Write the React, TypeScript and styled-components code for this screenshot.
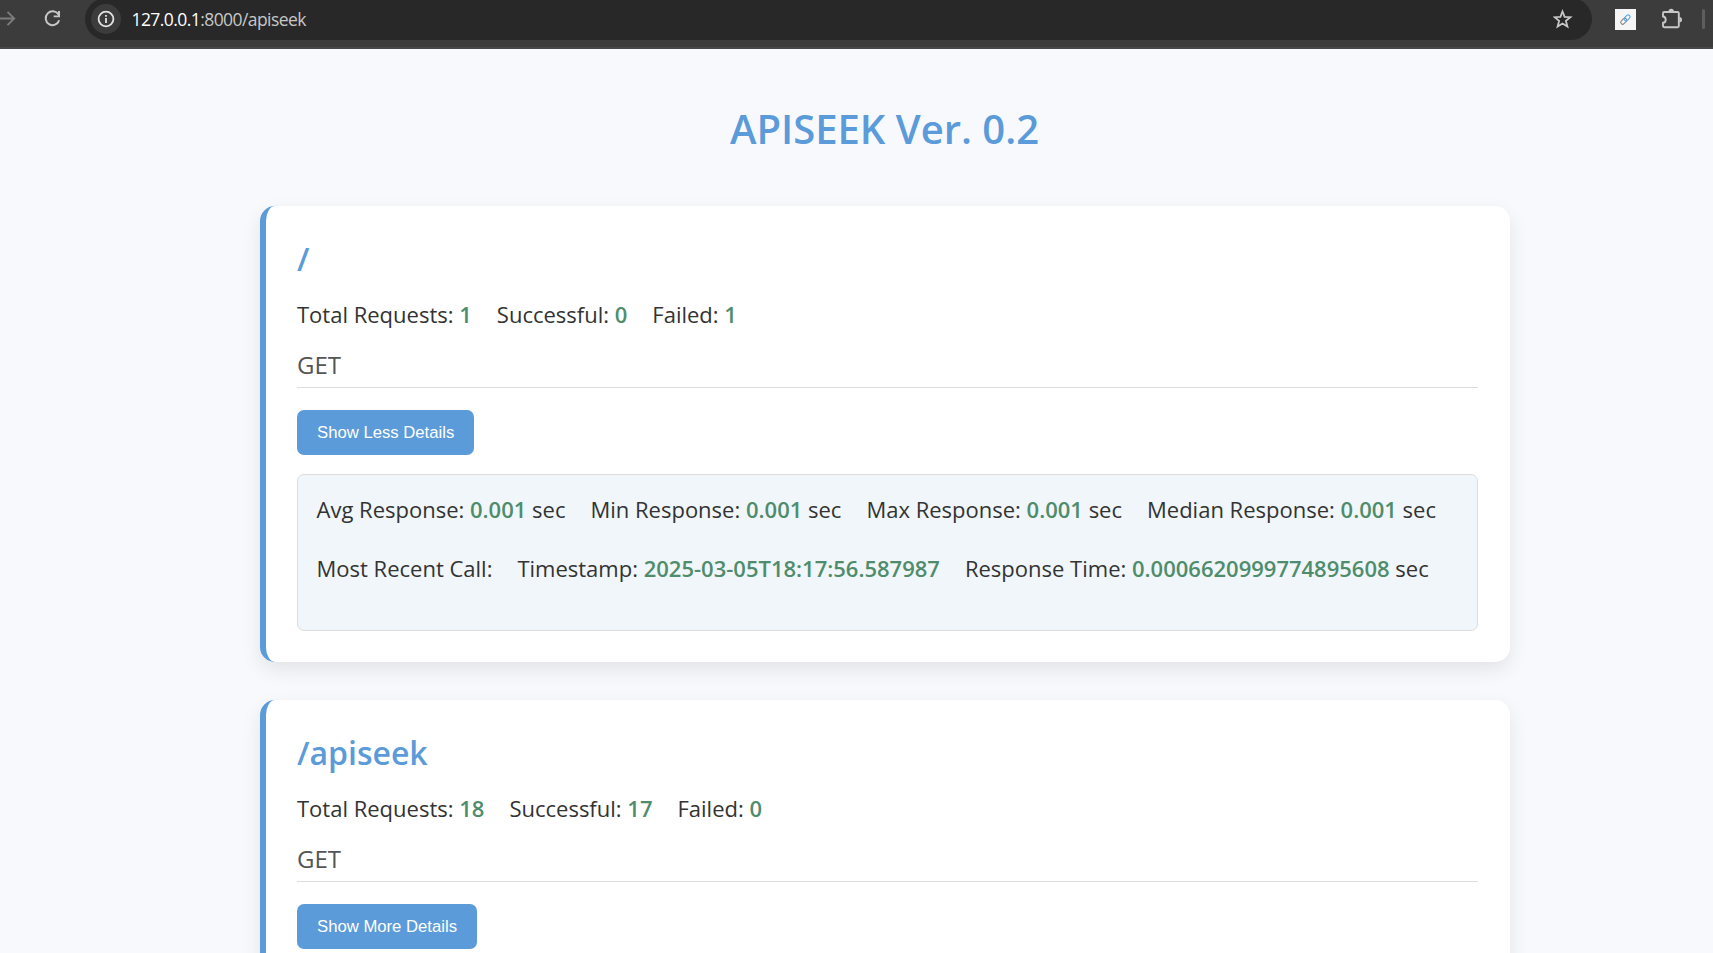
import React from "react";
import styled, { createGlobalStyle } from "styled-components";

const GlobalStyle = createGlobalStyle`
  *, *::before, *::after { box-sizing: border-box; }
  html, body { margin: 0; padding: 0; height: 100%; overflow: hidden; }
  body {
    background: #f8f9fd;
    color: #333;
    font-family: "Open Sans", "Noto Sans", sans-serif;
  }
`;

const Window = styled.div`
  height: 953px;
  overflow: hidden;
`;

const BrowserBar = styled.header`
  display: flex;
  align-items: flex-start;
  height: 49px;
  background: #3c3c3c;
  border-bottom: 2px solid #484646;
`;

const NavIcons = styled.div`
  display: flex;
  align-items: center;
  width: 85px;
  height: 38px;
`;

const AddressBar = styled.div`
  display: flex;
  align-items: center;
  width: 1507px;
  height: 42px;
  margin-top: -2px;
  padding: 2px 19px 2px 6px;
  background: #282828;
  border-radius: 21px;
`;

const InfoBadge = styled.span`
  display: flex;
  align-items: center;
  justify-content: center;
  width: 30px;
  height: 30px;
  border-radius: 50%;
  background: #3c3c3c;
`;

const Url = styled.span`
  flex: 1;
  margin-left: 10.5px;
  color: #c7c7c7;
  font-size: 17.5px;
  line-height: 24px;
  letter-spacing: -0.57px;
  white-space: nowrap;
`;

const Host = styled.span`
  color: #fff;
`;

const Extensions = styled.div`
  display: flex;
  align-items: center;
  height: 38px;
  margin-left: 23px;
`;

const LinkTile = styled.span`
  display: flex;
  align-items: center;
  justify-content: center;
  width: 21px;
  height: 21px;
  background: #f5f5f5;
`;

const PuzzleSlot = styled.span`
  display: flex;
  margin-left: 25px;
`;

const Separator = styled.span`
  width: 3px;
  height: 20px;
  margin-left: 19px;
  border-radius: 2px;
  background: #5e5e5e;
`;

const Page = styled.main`
  width: 1770px;
  padding-top: 48px;
`;

const Title = styled.h1`
  margin: 0 1px 45px 0;
  color: #5b9bd9;
  font-size: 40px;
  font-weight: 600;
  line-height: 64px;
  text-align: center;
`;

const CardList = styled.div`
  display: flex;
  flex-direction: column;
  gap: 38px;
  width: 1250px;
  margin: 0 auto;
`;

const Card = styled.section`
  padding: 31px 32px 31px 31px;
  background: #fff;
  border-left: 6px solid #5b9bd9;
  border-radius: 15px;
  box-shadow: 0 8px 20px rgba(0, 0, 0, 0.085);
`;

const Path = styled.h2`
  margin: 0;
  color: #5b9bd9;
  font-size: 32px;
  font-weight: 600;
  line-height: 44px;
`;

const StatRow = styled.div`
  display: flex;
  gap: 25px;
  font-size: 22px;
  line-height: 36px;
  white-space: nowrap;
`;

const Totals = styled(StatRow)`
  margin-top: 15px;
`;

const Value = styled.span`
  color: #4f8c6c;
  font-weight: 600;
`;

const Method = styled.h3`
  height: 42px;
  margin: 14px 0 22px;
  border-bottom: 1px solid #ddd;
  color: #555;
  font-size: 24px;
  font-weight: 400;
  line-height: 38px;
`;

const ToggleButton = styled.button`
  display: block;
  height: 45px;
  padding: 0 20px;
  border: 0;
  border-radius: 7px;
  background: #5b9bd9;
  color: #fff;
  font-family: "Liberation Sans", Arial, sans-serif;
  font-size: 16.7px;
  line-height: 20px;
`;

const Details = styled.div`
  display: flex;
  flex-direction: column;
  gap: 23px;
  height: 157px;
  margin-top: 19px;
  padding: 16px 18px;
  padding-left: 18.5px;
  background: #f0f6fa;
  border: 1px solid #ddd;
  border-radius: 7px;
`;

type StatProps = { label: string; value?: string; unit?: string };

const Stat = ({ label, value, unit }: StatProps) => (
  <span>
    {label}:{value && <> <Value>{value}</Value></>}
    {unit && ` ${unit}`}
  </span>
);

type EndpointProps = {
  path: string;
  total: string;
  successful: string;
  failed: string;
  expanded?: boolean;
};

const Endpoint = ({ path, total, successful, failed, expanded }: EndpointProps) => (
  <Card>
    <Path>{path}</Path>
    <Totals>
      <Stat label="Total Requests" value={total} />
      <Stat label="Successful" value={successful} />
      <Stat label="Failed" value={failed} />
    </Totals>
    <Method>GET</Method>
    <ToggleButton>{expanded ? "Show Less Details" : "Show More Details"}</ToggleButton>
    {expanded && (
      <Details>
        <StatRow>
          <Stat label="Avg Response" value="0.001" unit="sec" />
          <Stat label="Min Response" value="0.001" unit="sec" />
          <Stat label="Max Response" value="0.001" unit="sec" />
          <Stat label="Median Response" value="0.001" unit="sec" />
        </StatRow>
        <StatRow>
          <Stat label="Most Recent Call" />
          <Stat label="Timestamp" value="2025-03-05T18:17:56.587987" />
          <Stat label="Response Time" value="0.0006620999774895608" unit="sec" />
        </StatRow>
      </Details>
    )}
  </Card>
);

const NavDrawing = () => (
  <svg width="85" height="38" viewBox="0 0 85 38" fill="none">
    <path d="M0 18.5H14M7.5 11.8L14.2 18.5L7.5 25.2" stroke="#7c7c7c" strokeWidth="1.9" />
    <path d="M58.5 14.6A6.9 6.9 0 1 0 59.2 20.3" stroke="#c7c7c7" strokeWidth="2" />
    <path d="M60 11V17.3H53.7V15.4H58V11Z" fill="#c7c7c7" />
  </svg>
);

const InfoIcon = () => (
  <svg width="18" height="18" viewBox="0 0 18 18" fill="none">
    <circle cx="9" cy="9" r="7.4" stroke="#e3e3e3" strokeWidth="1.8" />
    <path d="M9 8V13M9 5V6.8" stroke="#e3e3e3" strokeWidth="1.8" />
  </svg>
);

const StarIcon = () => (
  <svg width="20" height="20" viewBox="0 0 20 20" fill="none">
    <path
      d="M9.5 2.5L11.6 7.8L17.4 8.2L12.9 11.9L14.4 17.6L9.5 14.5L4.6 17.6L6.1 11.9L1.6 8.2L7.4 7.8Z"
      stroke="#c7c7c7"
      strokeWidth="1.8"
    />
  </svg>
);

const LinkIcon = () => (
  <svg width="13" height="13" viewBox="0 0 13 13" fill="none">
    <g transform="rotate(-45 6.5 6.5)" strokeWidth="1.1">
      <rect x="0.6" y="4.6" width="6.8" height="3.8" rx="1.9" stroke="#858585" />
      <rect x="5.4" y="4.6" width="6.8" height="3.8" rx="1.9" stroke="#5ba6ea" />
    </g>
  </svg>
);

const PuzzleIcon = () => (
  <svg width="22" height="22" viewBox="0 0 22 22" fill="none">
    <path
      d="M3.2 4H16.5Q17.8 4 17.8 5.3V18Q17.8 19.2 16.5 19.2H3.2Q2 19.2 2 18V14.8C5.6 14.5 5.6 8.8 2 8.5V5.2Q2 4 3.2 4Z"
      stroke="#c7c7c7"
      strokeWidth="1.9"
    />
    <path d="M7.5 3.5A2.7 2.7 0 0 1 12.9 3.5ZM18.3 9A2.7 2.7 0 0 1 18.3 14.4Z" fill="#c7c7c7" />
  </svg>
);

export default function App() {
  return (
    <Window>
      <GlobalStyle />
      <BrowserBar>
        <NavIcons>
          <NavDrawing />
        </NavIcons>
        <AddressBar>
          <InfoBadge>
            <InfoIcon />
          </InfoBadge>
          <Url>
            <Host>127.0.0.1</Host>:8000/apiseek
          </Url>
          <StarIcon />
        </AddressBar>
        <Extensions>
          <LinkTile>
            <LinkIcon />
          </LinkTile>
          <PuzzleSlot>
            <PuzzleIcon />
          </PuzzleSlot>
          <Separator />
        </Extensions>
      </BrowserBar>
      <Page>
        <Title>APISEEK Ver. 0.2</Title>
        <CardList>
          <Endpoint path="/" total="1" successful="0" failed="1" expanded />
          <Endpoint path="/apiseek" total="18" successful="17" failed="0" />
        </CardList>
      </Page>
    </Window>
  );
}
